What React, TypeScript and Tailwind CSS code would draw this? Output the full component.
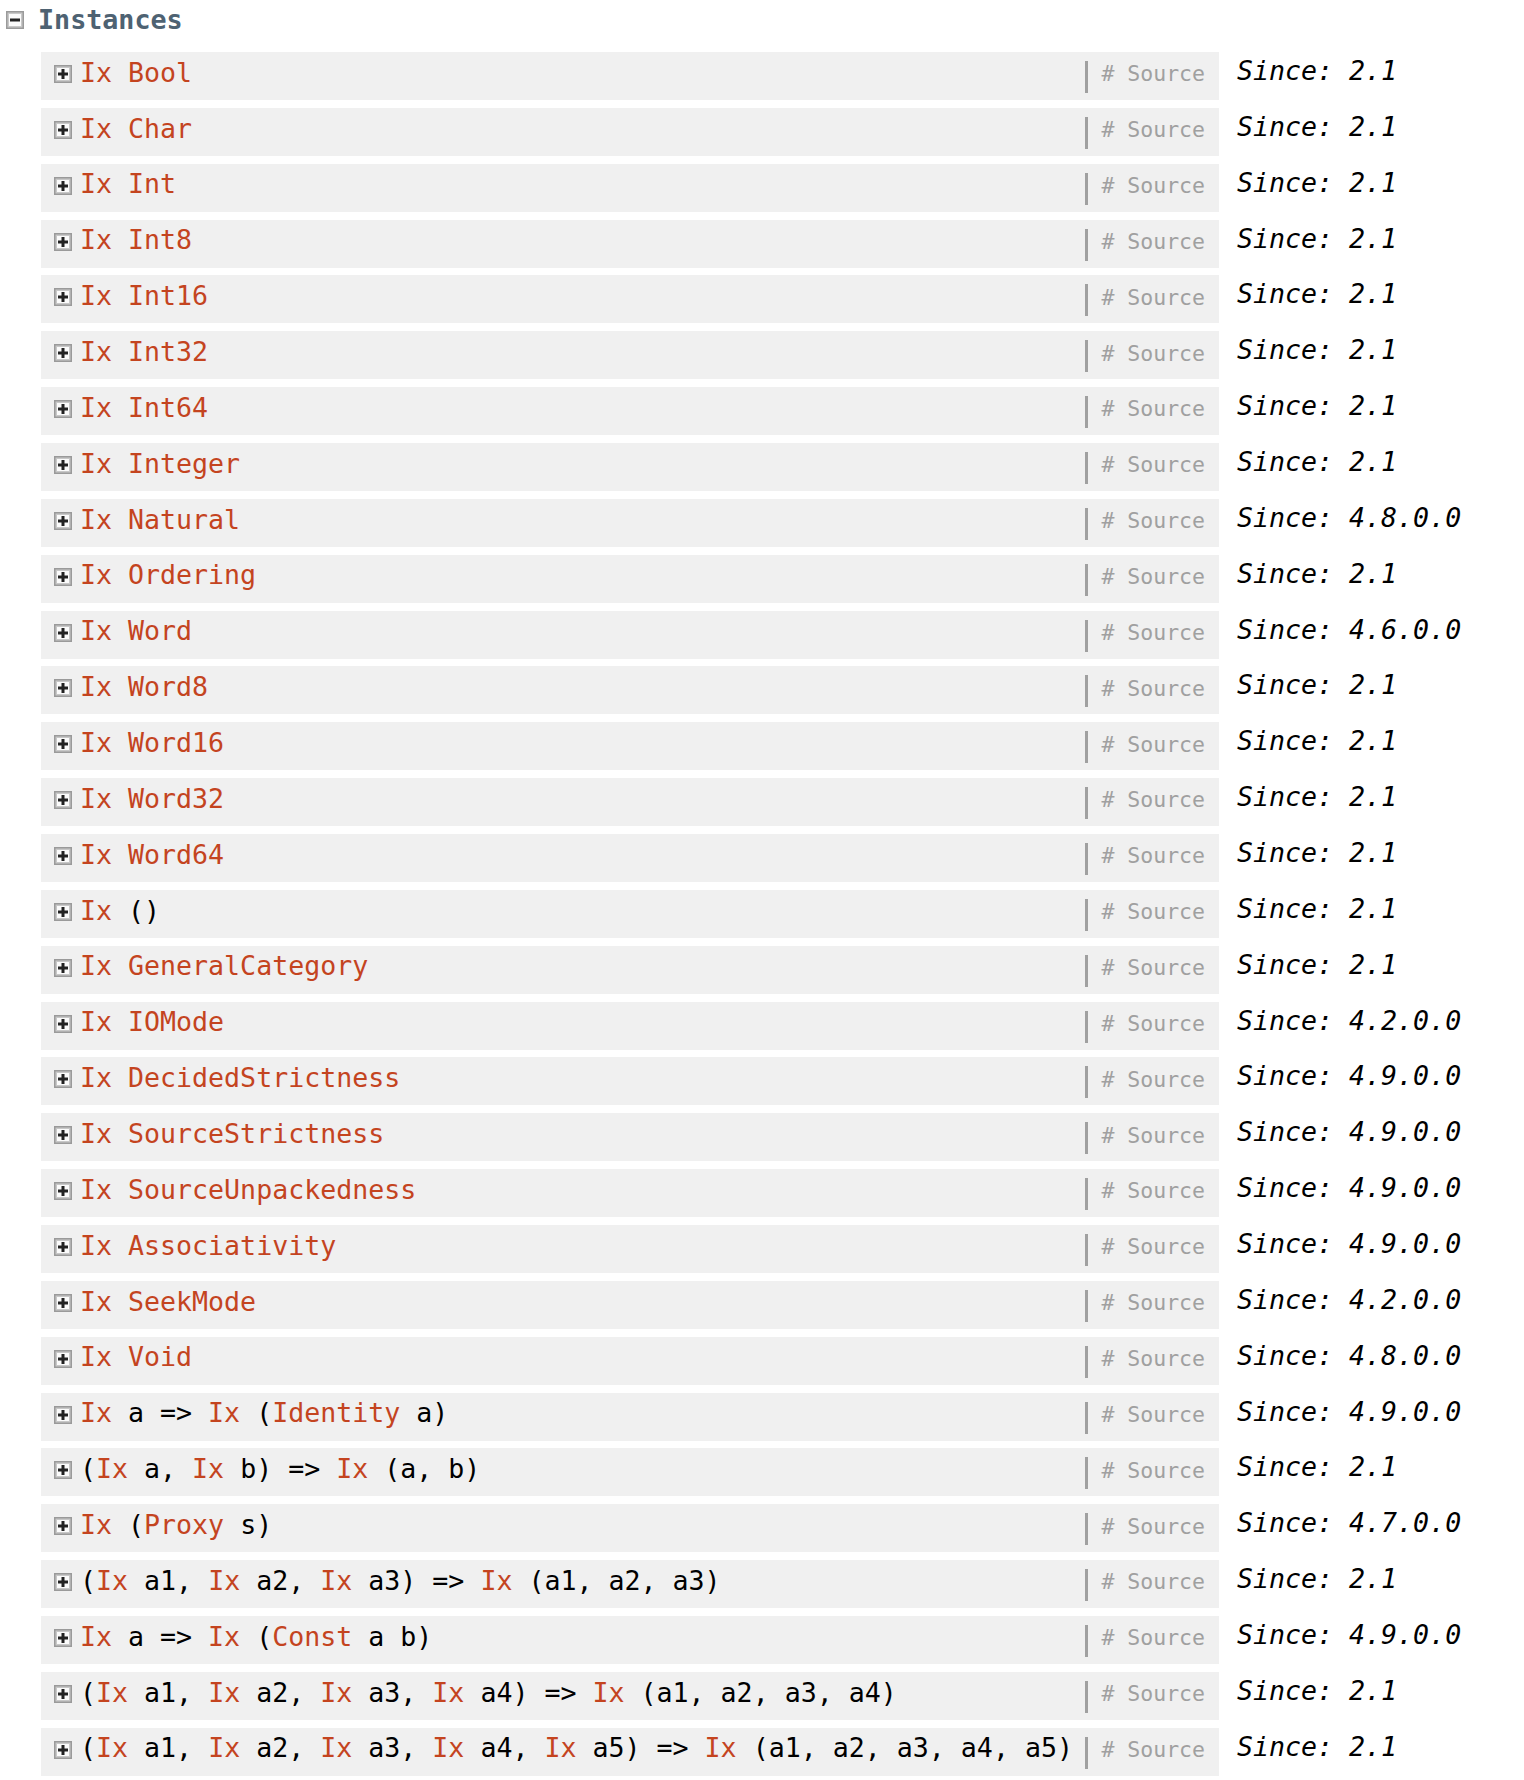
import React from 'react';

type Part = { t: string; red?: boolean };

// words in this set are type/class names and get the red link colour
const REDS = new Set([
  'Ix', 'Bool', 'Char', 'Int', 'Int8', 'Int16', 'Int32', 'Int64', 'Integer', 'Natural', 'Ordering',
  'Word', 'Word8', 'Word16', 'Word32', 'Word64', 'GeneralCategory', 'IOMode', 'DecidedStrictness',
  'SourceStrictness', 'SourceUnpackedness', 'Associativity', 'SeekMode', 'Void', 'Identity', 'Proxy', 'Const',
]);

const tokenize = (s: string): Part[] =>
  s.split(/([A-Za-z0-9]+)/).filter(Boolean).map((t) => ({ t, red: REDS.has(t) }));

const instances: [string, string][] = [
  ['Ix Bool', '2.1'],
  ['Ix Char', '2.1'],
  ['Ix Int', '2.1'],
  ['Ix Int8', '2.1'],
  ['Ix Int16', '2.1'],
  ['Ix Int32', '2.1'],
  ['Ix Int64', '2.1'],
  ['Ix Integer', '2.1'],
  ['Ix Natural', '4.8.0.0'],
  ['Ix Ordering', '2.1'],
  ['Ix Word', '4.6.0.0'],
  ['Ix Word8', '2.1'],
  ['Ix Word16', '2.1'],
  ['Ix Word32', '2.1'],
  ['Ix Word64', '2.1'],
  ['Ix ()', '2.1'],
  ['Ix GeneralCategory', '2.1'],
  ['Ix IOMode', '4.2.0.0'],
  ['Ix DecidedStrictness', '4.9.0.0'],
  ['Ix SourceStrictness', '4.9.0.0'],
  ['Ix SourceUnpackedness', '4.9.0.0'],
  ['Ix Associativity', '4.9.0.0'],
  ['Ix SeekMode', '4.2.0.0'],
  ['Ix Void', '4.8.0.0'],
  ['Ix a => Ix (Identity a)', '4.9.0.0'],
  ['(Ix a, Ix b) => Ix (a, b)', '2.1'],
  ['Ix (Proxy s)', '4.7.0.0'],
  ['(Ix a1, Ix a2, Ix a3) => Ix (a1, a2, a3)', '2.1'],
  ['Ix a => Ix (Const a b)', '4.9.0.0'],
  ['(Ix a1, Ix a2, Ix a3, Ix a4) => Ix (a1, a2, a3, a4)', '2.1'],
  ['(Ix a1, Ix a2, Ix a3, Ix a4, Ix a5) => Ix (a1, a2, a3, a4, a5)', '2.1'],
];

const ToggleBox = ({ open, className = '' }: { open: boolean; className?: string }) => (
  <svg width="18" height="18" viewBox="0 0 18 18" className={`shrink-0 ${className}`}>
    <rect x="0" y="0" width="18" height="18" fill="#9a9a9a" />
    <rect x="1.5" y="1.5" width="15" height="15" fill="#c8c8c8" />
    <rect x="3" y="3" width="12" height="12" fill="#fbfbfb" />
    <rect x="4" y="7.5" width="10" height="3" fill="#222" />
    {!open && <rect x="7.5" y="4" width="3" height="10" fill="#222" />}
  </svg>
);

export default function App() {
  return (
    <div className="bg-white min-h-screen text-black" style={{ fontFamily: '"DejaVu Sans Mono", monospace' }}>
      <div className="flex items-center h-[40px] pl-[6px]">
        <ToggleBox open />
        <span className="ml-[14px] text-[26.7px] font-bold text-[#4e6272] leading-none">Instances</span>
      </div>
      <div className="pl-[41px] pt-[12px]">
        {instances.map(([head, since]) => (
          <div key={head} className="flex items-start mb-[7.87px]">
            <div className="flex items-center w-[1178px] h-[48px] bg-[#f0f0f0] pl-[13px] pr-[14px]">
              <ToggleBox open={false} className="mb-[4px]" />
              <span className="ml-[8px] flex-1 text-[26.6px] leading-none whitespace-pre mt-[-6px]">
                {tokenize(head).map((p, i) => (
                  <span key={i} className={p.red ? 'text-[#c4441f]' : ''}>{p.t}</span>
                ))}
              </span>
              <div className="w-[3px] h-[32px] bg-[#a0a0a0] mt-[2px]" />
              <span className="ml-[13px] mt-[-4px] text-[21.5px] text-[#a0a0a0] whitespace-pre leading-none">
                # Source
              </span>
            </div>
            <span className="ml-[18px] mt-[6px] italic text-[26.6px] leading-none whitespace-pre">
              Since: {since}
            </span>
          </div>
        ))}
      </div>
    </div>
  );
}
